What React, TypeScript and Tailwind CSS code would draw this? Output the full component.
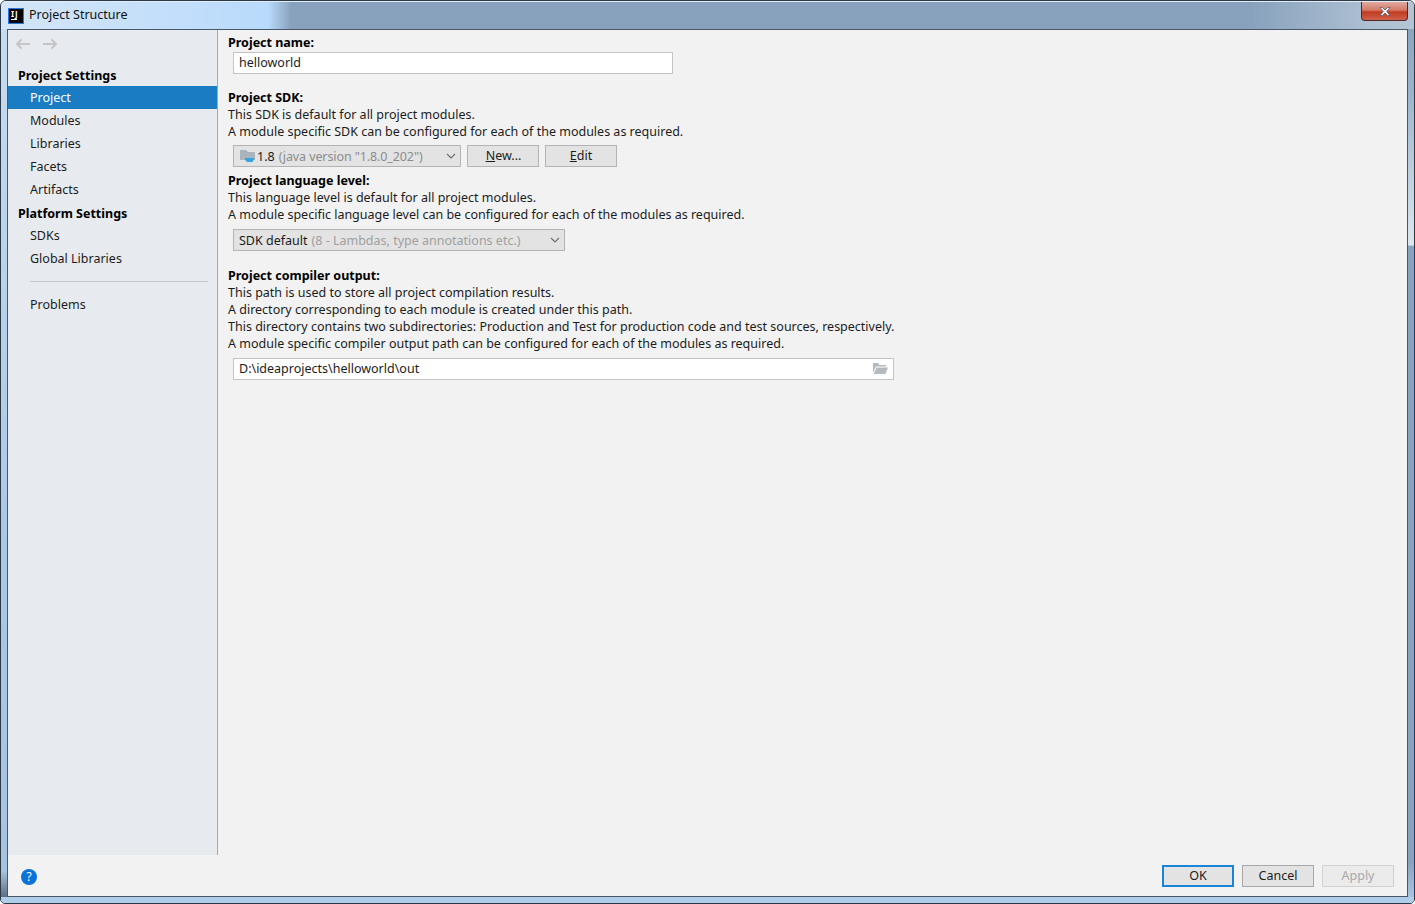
const font = "font-['Noto_Sans',sans-serif]";

function SidebarItem({ label, active }: { label: string; active?: boolean }) {
  return (
    <div className={`h-[23px] pl-[22px] leading-[23px] ${active ? "bg-[#1a7dc4] text-white" : "text-[#1c1c1c]"}`}>
      {label}
    </div>
  );
}

function Chevron() {
  return (
    <svg width="10" height="6" viewBox="0 0 10 6" fill="none" className="shrink-0">
      <path d="M1 1l4 4 4-4" stroke="#6e6e6e" strokeWidth="1.1" />
    </svg>
  );
}

function Help({ lines }: { lines: string[] }) {
  return (
    <div className="leading-[17px]">
      {lines.map((line) => (
        <div key={line}>{line}</div>
      ))}
    </div>
  );
}

function SmallButton({ children, className = "" }: { children: React.ReactNode; className?: string }) {
  return (
    <div className={`h-[22px] flex items-center justify-center border border-[#b4b4b4] bg-[#e3e3e3] ${className}`}>
      {children}
    </div>
  );
}

export default function App() {
  return (
    <div className={`${font} w-[1415px] h-[904px] overflow-hidden flex flex-col text-[12.5px] text-[#1c1c1c] rounded-t-[6px] rounded-b-[5px] border border-[#2c3a48] bg-[#b0cdea]`}>
      {/* Title bar */}
      <div className="h-[28px] flex shrink-0 border-t border-[#e4edf5] bg-[linear-gradient(90deg,#d4e6f7_0px,#b9dafc_267px,#88a2bd_290px,#88a2bd_1250px,#aec0d2_1370px,#b4c4d4_100%)]">
        <div className="flex items-start gap-[5px] pl-[7px] pt-[4px]">
          <div className="w-[16px] h-[16px] mt-[2px] bg-black border border-[#1e7ae0] flex flex-col items-start pl-[2px] pt-px">
            <span className="text-white text-[8px] leading-[8px] font-bold tracking-[1px]">IJ</span>
            <span className="w-[6px] h-px bg-white mt-px" />
          </div>
          <span className="text-[12.5px] leading-[17px] text-[#111]">Project Structure</span>
        </div>
        <div className="ml-auto mr-[6px] w-[47px] h-[19px] rounded-b-[4px] border border-[#4d2b2b] border-t-0 flex items-center justify-center bg-[linear-gradient(180deg,#e0a89e_0%,#d47a68_45%,#c03c22_55%,#d0604a_100%)]">
          <svg width="14" height="11" viewBox="0 0 14 11">
            <path d="M2 1.5h2.5L7 4l2.5-2.5H12L8.8 5.5 12 9.5H9.5L7 7 4.5 9.5H2l3.2-4z" fill="#f2f4f8" stroke="#5a5a6a" strokeWidth="0.8" />
          </svg>
        </div>
      </div>

      <div className="flex-1 flex min-h-0">
        {/* Left window edge */}
        <div className="w-[6px] shrink-0 bg-[linear-gradient(180deg,#c6dcf0_0%,#a9c8e6_60%,#a6c4e0_97%,#5d6f80_100%)]" />

        {/* Dialog body */}
        <div className="flex-1 flex flex-col border border-[#46586a] bg-[#f2f2f2] min-w-0">
          <div className="flex-1 flex min-h-0">
            {/* Sidebar */}
            <aside className="w-[210px] shrink-0 bg-[#e7ebef] border-r border-[#a8a8a8]">
              <div className="flex items-start gap-[11px] pl-[7px] pt-[8px] h-[30px]">
                <svg width="16" height="12" viewBox="0 0 16 12" fill="none">
                  <path d="M15 6H2M6.5 1.5L2 6l4.5 4.5" stroke="#c6c6c6" strokeWidth="2" />
                </svg>
                <svg width="16" height="12" viewBox="0 0 16 12" fill="none">
                  <path d="M1 6h13M9.5 1.5L14 6l-4.5 4.5" stroke="#c6c6c6" strokeWidth="2" />
                </svg>
              </div>
              <div className="pl-[10px] pt-[6px] h-[26px] leading-[20px] font-bold text-black">Project Settings</div>
              <SidebarItem label="Project" active />
              <SidebarItem label="Modules" />
              <SidebarItem label="Libraries" />
              <SidebarItem label="Facets" />
              <SidebarItem label="Artifacts" />
              <div className="pl-[10px] pt-px h-[23px] leading-[23px] font-bold text-black">Platform Settings</div>
              <SidebarItem label="SDKs" />
              <SidebarItem label="Global Libraries" />
              <div className="h-px bg-[#c4c8cc] ml-[22px] mr-[9px] mt-[11px] mb-[11px]" />
              <SidebarItem label="Problems" />
            </aside>

            {/* Main content */}
            <main className="flex-1 pl-[10px] pt-[4px]">
              <div className="font-bold leading-[17px] text-black">Project name:</div>
              <div className="ml-[5px] mt-[1px] w-[440px] h-[22px] bg-white border border-[#c4c4c4] pl-[5px] leading-[19px]">helloworld</div>

              <div className="font-bold leading-[17px] text-black mt-[15px]">Project SDK:</div>
              <Help
                lines={[
                  "This SDK is default for all project modules.",
                  "A module specific SDK can be configured for each of the modules as required.",
                ]}
              />
              <div className="ml-[5px] mt-[5px] flex gap-[6px]">
                <div className="w-[228px] h-[22px] flex items-center border border-[#b4b4b4] bg-[#e3e3e3] pl-[6px] pr-[4px]">
                  <svg width="16" height="14" viewBox="0 0 16 14" className="shrink-0 mr-px">
                    <path d="M0 1h6l2 2h7v8H0z" fill="#a9b4bd" />
                    <path d="M5 9h9v1.5l-1.5 2.5H7L5 10.5z" fill="#35a4e0" />
                  </svg>
                  <span className="mt-[2px]">1.8</span>
                  <span className="mt-[2px] text-[#8c8c8c] ml-[4px] tracking-[-0.1px]">(java version "1.8.0_202")</span>
                  <span className="ml-auto"><Chevron /></span>
                </div>
                <SmallButton className="w-[72px] pl-px"><span><u>N</u>ew...</span></SmallButton>
                <SmallButton className="w-[72px]"><span><u>E</u>dit</span></SmallButton>
              </div>

              <div className="font-bold leading-[17px] text-black mt-[5px]">Project language level:</div>
              <Help
                lines={[
                  "This language level is default for all project modules.",
                  "A module specific language level can be configured for each of the modules as required.",
                ]}
              />
              <div className="ml-[5px] mt-[6px] w-[332px] h-[22px] flex items-center border border-[#b4b4b4] bg-[#e3e3e3] pl-[5px] pr-[4px]">
                <span className="mt-[2px]">SDK default</span>
                <span className="mt-[2px] text-[#a0a0a0] ml-[4px]">(8 - Lambdas, type annotations etc.)</span>
                <span className="ml-auto"><Chevron /></span>
              </div>

              <div className="font-bold leading-[17px] text-black mt-[16px]">Project compiler output:</div>
              <Help
                lines={[
                  "This path is used to store all project compilation results.",
                  "A directory corresponding to each module is created under this path.",
                  "This directory contains two subdirectories: Production and Test for production code and test sources, respectively.",
                  "A module specific compiler output path can be configured for each of the modules as required.",
                ]}
              />
              <div className="ml-[5px] mt-[6px] w-[661px] h-[22px] flex items-center justify-between bg-white border border-[#c4c4c4] pl-[5px] pr-[5px]">
                <span>D:\ideaprojects\helloworld\out</span>
                <svg width="15" height="12" viewBox="0 0 15 12">
                  <path d="M0 0h5l1.5 2H13v1.5H3L0 10z" fill="#b4bac0" />
                  <path d="M3.5 4.5H15L12.5 11H0.8z" fill="#b4bac0" />
                </svg>
              </div>
            </main>
          </div>

          {/* Bottom bar */}
          <footer className="h-[41px] shrink-0 flex items-start pt-[10px] pl-[13px] pr-[13px]">
            <div className="w-[16px] h-[16px] mt-[4px] rounded-full bg-[#0a72d8] text-white text-[12px] leading-[16px] text-center">?</div>
            <div className="ml-auto flex gap-[8px]">
              <div className="w-[72px] h-[22px] flex items-center justify-center border-2 border-[#1a84d8] bg-[#e3e3e3]">OK</div>
              <div className="w-[72px] h-[22px] flex items-center justify-center border border-[#a8a8a8] bg-[#e3e3e3]">Cancel</div>
              <div className="w-[72px] h-[22px] flex items-center justify-center border border-[#d2d2d2] bg-[#ebebeb] text-[#a8a8a8]">Apply</div>
            </div>
          </footer>
        </div>

        {/* Right window edge */}
        <div className="w-[6px] shrink-0 bg-[linear-gradient(180deg,#8aa5c0_0%,#9db6cf_8%,#dde6ee_24.9%,#88a3bf_25%,#88a3bf_96%,#a8c4e0_100%)]" />
      </div>

      {/* Bottom window edge */}
      <div className="h-[6px] shrink-0 bg-[#b0cdea]" />
    </div>
  );
}
